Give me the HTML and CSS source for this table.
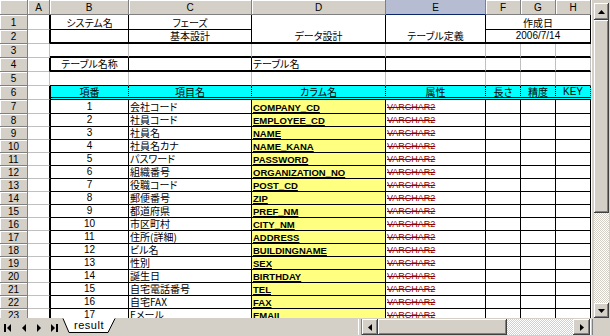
FILE: index.html
```html
<!DOCTYPE html>
<html lang="ja">
<head>
<meta charset="utf-8">
<title>result</title>
<link rel="stylesheet" href="styles.css">
</head>
<body>
<div class="window">
  <div class="main">
    <div class="sheet">
      <div class="ch corner"></div>
      <div class="ch">A</div>
      <div class="ch">B</div>
      <div class="ch">C</div>
      <div class="ch">D</div>
      <div class="ch sel">E</div>
      <div class="ch">F</div>
      <div class="ch">G</div>
      <div class="ch">H</div>

      <div class="rh">1</div>
      <div class="c k"></div>
      <div class="c lk k kb ctr">システム名</div>
      <div class="c k kb ctr">フェーズ</div>
      <div class="c k t2 ctr r2">データ設計</div>
      <div class="c k t2 ctr r2">テーブル定義</div>
      <div class="c k kb ctr c3">作成日</div>

      <div class="rh">2</div>
      <div class="c k"></div>
      <div class="c lk k t2"></div>
      <div class="c k t2 ctr">基本設計</div>
      <div class="c k t2 ctr c3 lat">2006/7/14</div>

      <div class="rh">3</div>
      <div class="c"></div>
      <div class="c t2"></div><div class="c t2"></div><div class="c t2"></div><div class="c t2"></div><div class="c t2"></div><div class="c t2"></div><div class="c t2"></div>

      <div class="rh">4</div>
      <div class="c k"></div>
      <div class="c lk k t2 ctr">テーブル名称</div>
      <div class="c k t2"></div>
      <div class="c k t2">テーブル名</div>
      <div class="c t2"></div><div class="c t2"></div><div class="c t2"></div><div class="c t2"></div>

      <div class="rh">5</div>
      <div class="c"></div>
      <div class="c kb"></div><div class="c kb"></div><div class="c kb"></div><div class="c kb"></div><div class="c kb"></div><div class="c kb"></div><div class="c kb"></div>

      <div class="rh">6</div>
      <div class="c k"></div>
      <div class="c cy lk ctr">項番</div>
      <div class="c cy ctr">項目名</div>
      <div class="c cy ctr">カラム名</div>
      <div class="c cy ctr">属性</div>
      <div class="c cy ctr">長さ</div>
      <div class="c cy ctr">精度</div>
      <div class="c cy ctr lat">KEY</div>

      <div class="rh">7</div><div class="c k"></div>
      <div class="c lk k kb ctr lat">1</div><div class="c k kb">会社コード</div>
      <div class="c k kb y"><span class="col">COMPANY_CD</span></div><div class="c k kb"><span class="typ">VARCHAR2</span></div>
      <div class="c k kb"></div><div class="c k kb"></div><div class="c k kb"></div>

      <div class="rh">8</div><div class="c k"></div>
      <div class="c lk k kb ctr lat">2</div><div class="c k kb">社員コード</div>
      <div class="c k kb y"><span class="col">EMPLOYEE_CD</span></div><div class="c k kb"><span class="typ">VARCHAR2</span></div>
      <div class="c k kb"></div><div class="c k kb"></div><div class="c k kb"></div>

      <div class="rh">9</div><div class="c k"></div>
      <div class="c lk k kb ctr lat">3</div><div class="c k kb">社員名</div>
      <div class="c k kb y"><span class="col">NAME</span></div><div class="c k kb"><span class="typ">VARCHAR2</span></div>
      <div class="c k kb"></div><div class="c k kb"></div><div class="c k kb"></div>

      <div class="rh">10</div><div class="c k"></div>
      <div class="c lk k kb ctr lat">4</div><div class="c k kb">社員名カナ</div>
      <div class="c k kb y"><span class="col">NAME_KANA</span></div><div class="c k kb"><span class="typ">VARCHAR2</span></div>
      <div class="c k kb"></div><div class="c k kb"></div><div class="c k kb"></div>

      <div class="rh">11</div><div class="c k"></div>
      <div class="c lk k kb ctr lat">5</div><div class="c k kb">パスワード</div>
      <div class="c k kb y"><span class="col">PASSWORD</span></div><div class="c k kb"><span class="typ">VARCHAR2</span></div>
      <div class="c k kb"></div><div class="c k kb"></div><div class="c k kb"></div>

      <div class="rh">12</div><div class="c k"></div>
      <div class="c lk k kb ctr lat">6</div><div class="c k kb">組織番号</div>
      <div class="c k kb y"><span class="col">ORGANIZATION_NO</span></div><div class="c k kb"><span class="typ">VARCHAR2</span></div>
      <div class="c k kb"></div><div class="c k kb"></div><div class="c k kb"></div>

      <div class="rh">13</div><div class="c k"></div>
      <div class="c lk k kb ctr lat">7</div><div class="c k kb">役職コード</div>
      <div class="c k kb y"><span class="col">POST_CD</span></div><div class="c k kb"><span class="typ">VARCHAR2</span></div>
      <div class="c k kb"></div><div class="c k kb"></div><div class="c k kb"></div>

      <div class="rh">14</div><div class="c k"></div>
      <div class="c lk k kb ctr lat">8</div><div class="c k kb">郵便番号</div>
      <div class="c k kb y"><span class="col">ZIP</span></div><div class="c k kb"><span class="typ">VARCHAR2</span></div>
      <div class="c k kb"></div><div class="c k kb"></div><div class="c k kb"></div>

      <div class="rh">15</div><div class="c k"></div>
      <div class="c lk k kb ctr lat">9</div><div class="c k kb">都道府県</div>
      <div class="c k kb y"><span class="col">PREF_NM</span></div><div class="c k kb"><span class="typ">VARCHAR2</span></div>
      <div class="c k kb"></div><div class="c k kb"></div><div class="c k kb"></div>

      <div class="rh">16</div><div class="c k"></div>
      <div class="c lk k kb ctr lat">10</div><div class="c k kb">市区町村</div>
      <div class="c k kb y"><span class="col">CITY_NM</span></div><div class="c k kb"><span class="typ">VARCHAR2</span></div>
      <div class="c k kb"></div><div class="c k kb"></div><div class="c k kb"></div>

      <div class="rh">17</div><div class="c k"></div>
      <div class="c lk k kb ctr lat">11</div><div class="c k kb">住所(詳細)</div>
      <div class="c k kb y"><span class="col">ADDRESS</span></div><div class="c k kb"><span class="typ">VARCHAR2</span></div>
      <div class="c k kb"></div><div class="c k kb"></div><div class="c k kb"></div>

      <div class="rh">18</div><div class="c k"></div>
      <div class="c lk k kb ctr lat">12</div><div class="c k kb">ビル名</div>
      <div class="c k kb y"><span class="col">BUILDINGNAME</span></div><div class="c k kb"><span class="typ">VARCHAR2</span></div>
      <div class="c k kb"></div><div class="c k kb"></div><div class="c k kb"></div>

      <div class="rh">19</div><div class="c k"></div>
      <div class="c lk k kb ctr lat">13</div><div class="c k kb">性別</div>
      <div class="c k kb y"><span class="col">SEX</span></div><div class="c k kb"><span class="typ">VARCHAR2</span></div>
      <div class="c k kb"></div><div class="c k kb"></div><div class="c k kb"></div>

      <div class="rh">20</div><div class="c k"></div>
      <div class="c lk k kb ctr lat">14</div><div class="c k kb">誕生日</div>
      <div class="c k kb y"><span class="col">BIRTHDAY</span></div><div class="c k kb"><span class="typ">VARCHAR2</span></div>
      <div class="c k kb"></div><div class="c k kb"></div><div class="c k kb"></div>

      <div class="rh">21</div><div class="c k"></div>
      <div class="c lk k kb ctr lat">15</div><div class="c k kb">自宅電話番号</div>
      <div class="c k kb y"><span class="col">TEL</span></div><div class="c k kb"><span class="typ">VARCHAR2</span></div>
      <div class="c k kb"></div><div class="c k kb"></div><div class="c k kb"></div>

      <div class="rh">22</div><div class="c k"></div>
      <div class="c lk k kb ctr lat">16</div><div class="c k kb">自宅FAX</div>
      <div class="c k kb y"><span class="col">FAX</span></div><div class="c k kb"><span class="typ">VARCHAR2</span></div>
      <div class="c k kb"></div><div class="c k kb"></div><div class="c k kb"></div>

      <div class="rh">23</div><div class="c k"></div>
      <div class="c lk k kb ctr lat">17</div><div class="c k kb">Eメール</div>
      <div class="c k kb y"><span class="col">EMAIL</span></div><div class="c k kb"><span class="typ">VARCHAR2</span></div>
      <div class="c k kb"></div><div class="c k kb"></div><div class="c k kb"></div>
    </div>

    <div class="vsb">
      <div class="btn vbtn">
        <svg width="7" height="4" viewBox="0 0 7 4"><polygon points="0,4 3.5,0 7,4" fill="#000"/></svg>
      </div>
      <div class="raised vthumb"></div>
      <div class="check vtrack"></div>
      <div class="btn vbtn vdown">
        <svg width="7" height="4" viewBox="0 0 7 4"><polygon points="0,0 7,0 3.5,4" fill="#000"/></svg>
      </div>
    </div>
  </div>

  <div class="tabbar">
    <svg class="nav" width="60" height="18" viewBox="0 0 60 18">
      <rect x="4" y="6" width="2" height="8" fill="#000"/>
      <polygon points="11,6 7,10 11,14" fill="#000"/>
      <polygon points="26,6 22,10 26,14" fill="#000"/>
      <polygon points="37,6 41,10 37,14" fill="#000"/>
      <polygon points="51,6 55,10 51,14" fill="#000"/>
      <rect x="56" y="6" width="2" height="8" fill="#000"/>
    </svg>
    <div class="tab">
      <svg class="tabshape" width="60" height="18" viewBox="0 0 60 18">
        <polygon points="3,0 9,14 48,14 55,0" fill="#fff"/>
        <polyline points="3,0.5 9,14.5 48,14.5 55,0.5" fill="none" stroke="#000" stroke-width="1"/>
      </svg>
      <span class="tabtext">result</span>
    </div>
    <div class="spacer"></div>
    <div class="split"></div>
    <div class="btn hbtn">
      <svg width="4" height="7" viewBox="0 0 4 7"><polygon points="4,0 0,3.5 4,7" fill="#000"/></svg>
    </div>
    <div class="raised hthumb"></div>
    <div class="check htrack"></div>
    <div class="btn hbtn hright">
      <svg width="4" height="7" viewBox="0 0 4 7"><polygon points="0,0 4,3.5 0,7" fill="#000"/></svg>
    </div>
    <div class="hsplit"></div>
    <div class="corner-box"></div>
  </div>
</div>
</body>
</html>
```

FILE: styles.css
```css
* { box-sizing: border-box; }
html, body { margin: 0; padding: 0; }
body {
  width: 610px;
  height: 336px;
  overflow: hidden;
  background: #d4d0c8;
  font-family: "Noto Sans CJK JP", "Noto Sans", sans-serif;
}
.window {
  display: flex;
  flex-direction: column;
  width: 610px;
  height: 336px;
}
.main {
  display: flex;
  height: 318px;
}
.sheet {
  display: grid;
  width: 591px;
  height: 318px;
  overflow: hidden;
  background: #fff;
  grid-template-columns: 28px 22px 79px 123px 134px 100px 35px 35px 35px;
  grid-template-rows: 15px 15px repeat(6, 14px) repeat(16, 13px);
  align-content: start;
}
.ch, .rh {
  background: #d4d0c8;
  border-right: 1px solid #808080;
  border-bottom: 1px solid #808080;
  box-shadow: inset 1px 1px 0 #fff;
  display: flex;
  align-items: center;
  justify-content: center;
  font-family: "Liberation Sans", sans-serif;
  font-size: 10px;
  color: #000;
}
.ch.sel {
  background: #b6bdd2;
  border-bottom-color: #0a246a;
  box-shadow: none;
}
.c {
  border-right: 1px solid #c0c0c0;
  border-bottom: 1px solid #c0c0c0;
  display: flex;
  align-items: flex-end;
  overflow: visible;
  white-space: nowrap;
  font-size: 10px;
  line-height: 12px;
  padding: 0 1px;
  color: #000;
  font-feature-settings: "palt";
}
.c.k { border-right-color: #000; }
.c.kb { border-bottom-color: #000; }
.c.t2 { border-bottom: 2px solid #000; }
.c.lk { border-left: 1px solid #000; }
.ctr { justify-content: center; }
.lat { font-family: "Liberation Sans", sans-serif; }
.r2 { grid-row: span 2; }
.c3 { grid-column: span 3; }
.c.cy {
  background: #00ffff;
  border-right: 1px dotted #000;
  border-bottom: 3px double #000;
  align-items: center;
}
.c.y { background: #ffff80; }
.col {
  font-family: "Liberation Sans", sans-serif;
  font-weight: bold;
  font-size: 9.5px;
  line-height: 11px;
  text-decoration: underline;
}
.typ {
  font-family: "Liberation Sans", sans-serif;
  font-size: 9px;
  line-height: 11px;
  color: #8b0000;
  text-decoration: line-through;
}

/* Win classic 3D */
.btn, .raised {
  background: #d4d0c8;
  box-shadow: inset -1px -1px 0 #404040, inset 1px 1px 0 #fff, inset -2px -2px 0 #808080, inset 2px 2px 0 #d4d0c8;
}
.btn {
  display: flex;
  align-items: center;
  justify-content: center;
}
.check {
  background: repeating-conic-gradient(#d4d0c8 0 25%, #fff 0 50%) 0 0 / 2px 2px;
}

/* vertical scrollbar */
.vsb {
  width: 19px;
  height: 318px;
  display: flex;
  flex-direction: column;
  background: #d4d0c8;
  border-left: 1px solid #fff;
  padding: 3px 1px 0 2px;
}
.vbtn { height: 17px; flex: none; }
.vthumb { height: 193px; flex: none; }
.vtrack { flex: 1; }
.vdown { height: 15px; }

/* tab bar and horizontal scrollbar */
.tabbar {
  display: flex;
  height: 18px;
  background: #d4d0c8;
  align-items: flex-start;
}
.nav { flex: none; display: block; }
.tab {
  position: relative;
  width: 60px;
  height: 18px;
  flex: none;
  display: flex;
  justify-content: center;
}
.tabshape {
  position: absolute;
  left: 0;
  top: 0;
}
.tabtext {
  position: relative;
  font-family: "Liberation Sans", sans-serif;
  font-size: 11px;
  letter-spacing: 0.5px;
  line-height: 13px;
  margin-top: 1px;
  margin-left: -2px;
  color: #000;
}
.spacer { flex: 1; }
.split {
  width: 4px;
  height: 16px;
  margin-top: 1px;
  background: #d4d0c8;
  border-left: 1px solid #fff;
  border-right: 1px solid #808080;
}
.hbtn { width: 16px; height: 16px; margin-top: 1px; flex: none; }
.hright { width: 17px; }
.hthumb { width: 129px; height: 16px; margin-top: 1px; flex: none; }
.htrack { width: 66px; height: 16px; margin-top: 1px; flex: none; }
.hsplit {
  width: 3px;
  height: 16px;
  margin-top: 1px;
  border-left: 1px solid #fff;
  border-right: 1px solid #808080;
}
.corner-box { width: 17px; height: 18px; }
```
